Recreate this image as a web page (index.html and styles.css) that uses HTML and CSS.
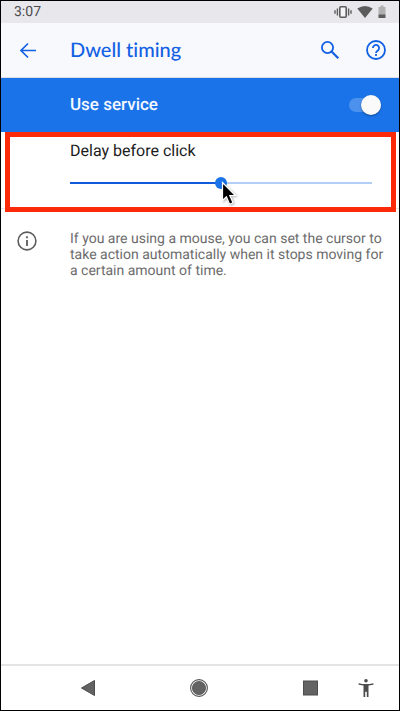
FILE: index.html
```
<!DOCTYPE html>
<html lang="en">
  <head>
    <meta charset="utf-8">
    <meta name="viewport" content="width=device-width, initial-scale=1">
    <title>Dwell timing</title>
    <link rel="stylesheet" href="styles.css">
  </head>
  <body>
    <div class="screen">
      <div class="status-bar">
        <span class="clock">3:07</span>
        <svg class="status-icon" width="18" height="14" viewBox="0 0 18 14">
          <rect x="5.8" y="1.8" width="6.4" height="10.4" rx="1" fill="#f4f4f6" stroke="#5c5c5c" stroke-width="1.6"/>
          <path d="M3.4 3.5v7M14.6 3.5v7M1 5.2v3.6M17 5.2v3.6" stroke="#5c5c5c" stroke-width="1.4"/>
        </svg>
        <svg class="status-icon" width="16" height="14" viewBox="0 0 16 14">
          <path d="M0.3 3.6Q8-1.6 15.7 3.6L8 13z" fill="#5c5c5c"/>
        </svg>
        <svg class="status-icon battery" width="8" height="14" viewBox="0 0 8 14">
          <path d="M2.5 0.5h3v1.5h2v8h-7v-8h2z" fill="#b0b0b0"/>
          <path d="M0.5 9.5h7v3.5h-7z" fill="#5c5c5c"/>
        </svg>
      </div>

      <header class="app-bar">
        <button class="icon-button" aria-label="Back">
          <svg width="18" height="18" viewBox="0 0 18 18" fill="none" stroke="#1260e4" stroke-width="1.7">
            <path d="M17 9.5H2M9 2.5L2 9.5l7 7"/>
          </svg>
        </button>
        <h1 class="title">Dwell timing</h1>
        <button class="icon-button" aria-label="Search">
          <svg width="20" height="20" viewBox="0 0 20 20" fill="none" stroke="#1260e4">
            <circle cx="7.5" cy="7.5" r="5.6" stroke-width="1.8"/>
            <path d="M11.5 11.5L18.3 18.3" stroke-width="2.2"/>
          </svg>
        </button>
        <button class="icon-button help" aria-label="Help">
          <svg width="20" height="20" viewBox="0 0 20 20" fill="none" stroke="#1260e4" stroke-width="1.8">
            <circle cx="10" cy="10" r="9"/>
            <path d="M6.9 8.1a3.1 3.1 0 1 1 5.2 2.2C11 11.2 10 11.7 10 13"/>
            <path d="M10 14.1v1.9"/>
          </svg>
        </button>
      </header>

      <label class="service-row">
        <span>Use service</span>
        <input class="switch" type="checkbox" role="switch" checked>
      </label>

      <section class="delay">
        <label class="delay-label" for="delay">Delay before click</label>
        <div class="slider-wrap">
          <input class="slider" id="delay" type="range" min="0" max="100" value="50">
          <svg class="pointer" width="16" height="26" viewBox="0 0 16 26">
            <path d="M1.5 1.5v18l3.9-3.7 3.2 7.4 3.4-1.5-3.2-7.2h5.6z" fill="#000" stroke="#fff" stroke-width="1.2"/>
          </svg>
        </div>
        <div class="highlight"></div>
      </section>

      <section class="info">
        <svg class="info-icon" width="20" height="20" viewBox="0 0 20 20">
          <circle cx="10" cy="10" r="8.9" fill="none" stroke="#5c5c5c" stroke-width="1.6"/>
          <path d="M10 9v6M10 5.2v2" stroke="#5c5c5c" stroke-width="1.8"/>
        </svg>
        <p class="info-text">If you are using a mouse, you can set the cursor to take action automatically when it stops moving for a certain amount of time.</p>
      </section>

      <nav class="nav-bar">
        <div class="nav-main">
          <button aria-label="Back">
            <svg width="20" height="20" viewBox="0 0 20 20">
              <path d="M3.5 10L16.5 2.5v15z" fill="#636363" stroke="#4c4c4c"/>
            </svg>
          </button>
          <button aria-label="Home">
            <svg width="20" height="20" viewBox="0 0 20 20">
              <circle cx="10" cy="10" r="8.4" fill="#fff" stroke="#555" stroke-width="1.1"/>
              <circle cx="10" cy="10" r="6.6" fill="#636363" stroke="#505050" stroke-width="0.8"/>
            </svg>
          </button>
          <button aria-label="Overview">
            <svg width="20" height="20" viewBox="0 0 20 20">
              <rect x="3.5" y="3" width="14" height="14" fill="#636363" stroke="#4c4c4c"/>
            </svg>
          </button>
        </div>
        <button aria-label="Accessibility">
          <svg width="20" height="20" viewBox="0 0 20 20" fill="#4c4c4c">
            <circle cx="10" cy="2.8" r="1.8"/>
            <path d="M2.6 5.2Q10 7 17.4 5.2v1.5L12.5 7.6V19h-1.7v-5.3H9.2V19H7.5V7.6L2.6 6.7z"/>
          </svg>
        </button>
      </nav>
    </div>
  </body>
</html>
```
FILE: styles.css
```
* {
  box-sizing: border-box;
}

body {
  margin: 0;
  font-family: Roboto, "Liberation Sans", sans-serif;
  text-rendering: geometricPrecision;
  background-color: #fff;
}

button {
  display: flex;
  padding: 0;
  border: none;
  background-color: transparent;
  cursor: pointer;
}

svg {
  display: block;
}

.screen {
  display: flex;
  flex-direction: column;
  min-height: 100vh;
  border: 1px solid #000;
}

.status-bar {
  display: flex;
  align-items: center;
  height: 22px;
  padding: 0 13px;
  background-color: #e8e8ec;
}

.clock {
  flex: 1;
  font-size: 14px;
  color: #4c4c4c;
}

.status-icon {
  margin-left: 5px;
}

.app-bar {
  display: flex;
  align-items: center;
  height: 55px;
  padding: 0 13px 0 18px;
  border-bottom: 1px solid #dcdee4;
  background-color: #f8f9fc;
}

.title {
  flex: 1;
  margin: 0;
  padding-left: 33px;
  font-family: Lato, Roboto, sans-serif;
  font-size: 20px;
  font-weight: 500;
  font-variant-ligatures: none;
  color: #1260e4;
}

.help {
  margin-left: 26px;
}

.service-row {
  display: flex;
  align-items: center;
  justify-content: space-between;
  height: 54px;
  padding: 0 18px 0 69px;
  font-size: 17px;
  font-weight: 500;
  color: #f4f8ff;
  background-color: #1a73e8;
}

.switch {
  display: flex;
  align-items: center;
  justify-content: flex-end;
  appearance: none;
  width: 32px;
  height: 14px;
  margin: 0;
  border-radius: 7px;
  background-color: #4b91ed;
}

.switch::before {
  content: "";
  flex: none;
  width: 20px;
  height: 20px;
  border-radius: 50%;
  background-color: #fafafa;
  box-shadow: 0 1px 2px rgba(0, 0, 0, 0.35);
}

.delay {
  position: relative;
  padding: 9px 27px 19px 69px;
  border-bottom: 1px solid #e4e4e4;
}

.delay-label {
  display: block;
  font-size: 16px;
  line-height: 20px;
  color: #1c1c1c;
}

.slider-wrap {
  position: relative;
  margin-top: 16px;
}

.slider {
  display: block;
  appearance: none;
  width: 100%;
  height: 12px;
  margin: 0;
  background: linear-gradient(to right, #1259dc 50%, #b3cff8 50%) center / 100% 2px no-repeat;
}

.slider::-webkit-slider-thumb {
  appearance: none;
  width: 12px;
  height: 12px;
  border-radius: 50%;
  background-color: #1a73e8;
}

.pointer {
  position: absolute;
  top: 4px;
  left: 50%;
  filter: drop-shadow(1px 1px 1px rgba(0, 0, 0, 0.3));
}

.highlight {
  position: absolute;
  top: 0;
  right: 3px;
  bottom: -4px;
  left: 4px;
  border: 5px solid #fd2a0a;
  pointer-events: none;
}

.info {
  display: flex;
  flex: 1;
  align-items: flex-start;
  padding: 22px 14px 22px 16px;
}

.info-text {
  flex: 1;
  margin: 0;
  padding-left: 33px;
  font-size: 14px;
  line-height: 16px;
  color: #6c6c6c;
}

.nav-bar {
  display: flex;
  align-items: center;
  height: 46px;
  padding: 0 23px 0 77px;
  border-top: 2px solid #e4e4e4;
}

.nav-main {
  display: flex;
  flex: 1;
  justify-content: space-between;
  margin-right: 36px;
}
```
